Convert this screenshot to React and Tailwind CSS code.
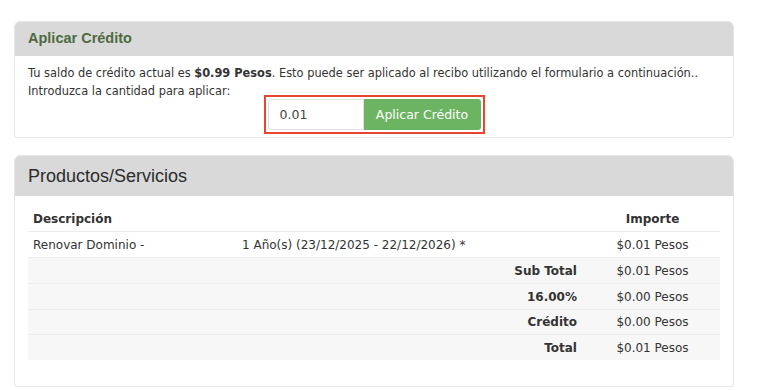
import React from "react";

const rows = [
  { label: "Sub Total", value: "$0.01 Pesos", h: "h-[26px]" },
  { label: "16.00%", value: "$0.00 Pesos", h: "h-[26px]" },
  { label: "Crédito", value: "$0.00 Pesos", h: "h-[25px]" },
  { label: "Total", value: "$0.01 Pesos", h: "h-[25px]" },
];

const App = () => {
  return (
    <div className="w-[757px] h-[390px] bg-white pt-[21px] pl-[14px] overflow-hidden font-['DejaVu_Sans',Verdana,sans-serif] text-[#333]">
      <div className="w-[720px] rounded-t-[6px] rounded-b-[3px] border border-[#e6e6e6] overflow-hidden">
        <div className="h-[34px] bg-[#d9d9d9] flex items-center px-[13px]">
          <h3 className="font-['Liberation_Sans',Arial,sans-serif] font-bold text-[14.5px] text-[#4e6b40]">
            Aplicar Crédito
          </h3>
        </div>
        <div className="px-[13px] pt-[8px] pb-[3px] text-[11.4px] leading-[18px]">
          <p className="whitespace-nowrap">
            Tu saldo de crédito actual es <b>$0.99 Pesos</b>. Esto puede ser aplicado al recibo utilizando el formulario a continuación..
          </p>
          <p>Introduzca la cantidad para aplicar:</p>
          <div className="flex justify-center -mt-[5px]">
            <div className="border-2 border-[#e8452f] p-[2px] flex">
              <div className="w-[96px] h-[31px] border border-[#e2e2e2] rounded-l-[3px] flex items-center pl-[11px] text-[12.5px] text-[#444]">
                0.01
              </div>
              <button className="w-[117px] h-[31px] bg-[#6db462] text-white text-[12.5px] rounded-r-[3px]">
                Aplicar Crédito
              </button>
            </div>
          </div>
        </div>
      </div>

      <div className="w-[720px] mt-[17px] rounded-t-[6px] rounded-b-[3px] border border-[#e6e6e6] overflow-hidden h-[232px]">
        <div className="h-[40px] bg-[#d9d9d9] flex items-center px-[13px]">
          <h3 className="font-['Liberation_Sans',Arial,sans-serif] text-[18px] text-[#2b2b2b]">
            Productos/Servicios
          </h3>
        </div>
        <div className="px-[13px] pt-[11px] text-[12px]">
          <div className="flex h-[25px] items-center border-b border-[#ececec] font-bold">
            <div className="flex-1 pl-[5px]">Descripción</div>
            <div className="w-[135px] text-center">Importe</div>
          </div>
          <div className="flex h-[26px] items-center border-b border-[#ececec]">
            <div className="flex-1 pl-[5px] flex">
              <span className="w-[209px]">Renovar Dominio -</span>
              <span>1 Año(s) (23/12/2025 - 22/12/2026) *</span>
            </div>
            <div className="w-[135px] text-center">$0.01 Pesos</div>
          </div>
          {rows.map((r, i) => (
            <div
              key={r.label}
              className={
                "flex items-center bg-[#f7f7f7] " +
                r.h +
                (i < rows.length - 1 ? " border-b border-[#ececec]" : "")
              }
            >
              <div className="flex-1 text-right pr-[8px] font-bold">{r.label}</div>
              <div className="w-[135px] text-center">{r.value}</div>
            </div>
          ))}
        </div>
      </div>
    </div>
  );
};

export default App;
